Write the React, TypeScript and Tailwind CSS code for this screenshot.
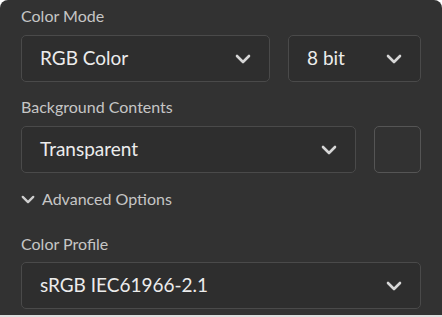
import { useState } from "react";

function Chevron({ className }: { className?: string }) {
  return (
    <svg
      viewBox="0 0 16 10"
      className={className}
      fill="none"
      stroke="currentColor"
      strokeWidth={2.6}
      strokeLinecap="round"
      strokeLinejoin="round"
    >
      <path d="M2 2 L8 8 L14 2" />
    </svg>
  );
}

function Select({ value, className }: { value: string; className?: string }) {
  return (
    <button
      className={`flex h-[47px] items-center justify-between rounded-[5px] border border-[#4a4a4a] bg-[#2e2e2e] pl-[18px] pr-[18px] text-left ${className ?? ""}`}
    >
      <span className="text-[19px] text-[#ececec]">{value}</span>
      <Chevron className="h-[10px] w-[16px] text-[#d6d6d6]" />
    </button>
  );
}

function Label({ children, className }: { children: React.ReactNode; className?: string }) {
  return (
    <div className={`text-[16px] leading-6 text-[#c6c6c6] ${className ?? ""}`}>{children}</div>
  );
}

export default function App() {
  const [open, setOpen] = useState(false);

  return (
    <div className="h-[317px] w-[442px] bg-white" style={{ fontFamily: "Lato, 'Open Sans', sans-serif" }}>
      <div className="flex h-[317px] flex-col rounded-t-[8px] border-b-2 border-[#dedede] bg-[#323232] px-[21px] pt-[4px]">
        <Label className="mb-[7px]">Color Mode</Label>
        <div className="flex gap-[18px]">
          <Select value="RGB Color" className="w-[249px]" />
          <Select value="8 bit" className="flex-1" />
        </div>

        <Label className="mb-[7px] mt-[13px]">Background Contents</Label>
        <div className="flex gap-[18px]">
          <Select value="Transparent" className="w-[335px]" />
          <div className="h-[47px] w-[47px] rounded-[5px] border border-[#555555]" />
        </div>

        <button
          onClick={() => setOpen(!open)}
          className="mt-[14px] flex items-center gap-[7px] text-left text-[16px] leading-6 text-[#c6c6c6]"
        >
          <Chevron className="h-[9px] w-[14px] text-[#cfcfcf]" />
          <span>Advanced Options</span>
        </button>

        <Label className="mb-[6px] mt-[21px]">Color Profile</Label>
        <Select value="sRGB IEC61966-2.1" className="w-full" />
      </div>
    </div>
  );
}
